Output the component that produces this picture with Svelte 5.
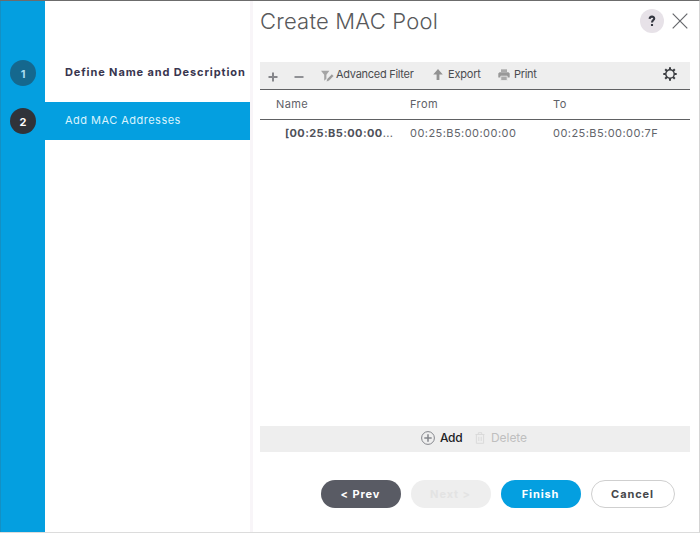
<script>
  const steps = [
    { n: 1, label: 'Define Name and Description', active: false },
    { n: 2, label: 'Add MAC Addresses', active: true }
  ];
  const rows = [{ name: '[00:25:B5:00:00', from: '00:25:B5:00:00:00', to: '00:25:B5:00:00:7F' }];
</script>

<div class="dialog">
  <aside class="rail">
    {#each steps as s}
      <div class="badge" class:current={s.active}>{s.n}</div>
    {/each}
  </aside>
  <nav>
    {#each steps as s}
      <div class="step" class:active={s.active}><span>{s.label}</span></div>
    {/each}
  </nav>
  <main>
    <header>
      <h1>Create MAC Pool</h1>
      <div class="help"><svg width="8" height="12" viewBox="0 0 10 14" fill="none" stroke="#353741" stroke-width="2.6"><path d="M2 4.4C2.2 .7 7.8 .7 7.8 3.8C7.8 5.8 5 5.8 5 9M5 10.8V13.4" /></svg></div>
      <svg class="close" width="16" height="16" viewBox="0 0 16 16" stroke="#66686c" stroke-width="1.2"><path d="M.7 .7L15.3 15.3M15.3 .7L.7 15.3" /></svg>
    </header>

    <div class="toolbar">
      <svg class="plus" width="10" height="10" viewBox="0 0 10 10" stroke="#85868a" stroke-width="2"><path d="M.5 5H9.5M5 .5V9.5" /></svg>
      <svg class="minus" width="10" height="10" viewBox="0 0 10 10" stroke="#909195" stroke-width="2"><path d="M.5 5H9.5" /></svg>
      <svg class="filter" width="13" height="12" viewBox="0 0 13 12"><path d="M0 .8H8.4L5.4 4.8V8.8L3.2 10.8V4.8Z" fill="#a4a4a4" /><path d="M5.2 11.8L5.9 8.9L10.8 4L12.8 6L7.9 10.9Z" fill="#9b9b9b" stroke="#eee" stroke-width=".7" /></svg>
      <span class="adv">Advanced Filter</span>
      <svg class="up" width="10" height="11" viewBox="0 0 10 11" fill="#929292"><path d="M5 0L9.8 5.6H6.4V11H3.6V5.6H.2Z" /></svg>
      <span class="export">Export</span>
      <svg class="printer" width="12" height="12" viewBox="0 0 12 12"><path d="M3 .3H9V3H3Z" fill="#aaa" /><path d="M1.5 3.2H10.5L11.7 4.5V8.5H.3V4.5Z" fill="#989898" /><path d="M2.8 7.2H9.2V11.5H2.8Z" fill="#aaa" stroke="#eee" stroke-width=".8" /></svg>
      <span class="print">Print</span>
      <svg class="gear" width="14" height="14" viewBox="0 0 14 14" fill="none" stroke="#3a3c40"><circle cx="7" cy="7" r="4.2" stroke-width="1.4" /><path d="M7 .3V2.8M7 11.2V13.7M.3 7H2.8M11.2 7H13.7M2.2 2.2L4 4M10 10L11.8 11.8M2.2 11.8L4 10M10 4L11.8 2.2" stroke-width="2" /></svg>
    </div>

    <div class="grid head"><span class="h1">Name</span><span class="h2">From</span><span class="h3">To</span></div>
    <div class="body">
      {#each rows as r}
        <div class="grid row"><span class="name"><b>{r.name}</b>...</span><span>{r.from}</span><span>{r.to}</span></div>
      {/each}
    </div>

    <div class="tablefoot">
      <svg width="14" height="14" viewBox="0 0 14 14" fill="none" stroke="#84868c"><circle cx="7" cy="7" r="6.4" stroke-width="1" /><path d="M7 3.3V10.7M3.3 7H10.7" stroke-width="1.5" /></svg>
      <span class="add">Add</span>
      <svg class="trash" width="10" height="12" viewBox="0 0 10 12" fill="none" stroke="#dadada"><path d="M.5 2.5H9.5M3.3 2.5V.7H6.7V2.5M1.4 2.5V11.3H8.6V2.5M3.8 4.8V9M6.2 4.8V9" /></svg>
      <span class="delete">Delete</span>
    </div>

    <footer>
      <button class="prev">&lt; Prev</button>
      <button class="next" disabled>Next &gt;</button>
      <button class="finish">Finish</button>
      <button class="cancel">Cancel</button>
    </footer>
  </main>
</div>

<style>
  :global(body) { margin: 0; background: #fff; }
  * { box-sizing: border-box; }
  .dialog {
    display: flex; width: 700px; height: 533px; overflow: hidden; background: #fff;
    border-top: 1px solid #6c6c6c; border-right: 1px solid #d4d4d4; border-bottom: 1px solid #dcdcdc;
    font-family: Inter, "Liberation Sans", sans-serif; font-size: 11px; color: #4f5056; white-space: nowrap;
  }
  .rail {
    flex: 0 0 45px; background: #049fe0; border-left: 1px solid #1390c4; padding: 59px 0 0 9px;
    display: flex; flex-direction: column; gap: 22px;
  }
  .badge {
    width: 26px; height: 26px; border-radius: 50%; background: #15688e; color: #a7dcf1;
    font-weight: 700; line-height: 28px; text-align: center;
  }
  .current { background: #303339; color: #fff; }
  nav { flex: 0 0 205px; padding-top: 53px; }
  .step { height: 38px; margin-bottom: 10px; padding-left: 20px; line-height: 37px; font-weight: 700; color: #39364f; }
  .step span { letter-spacing: .88px; }
  .active { background: #049fe0; color: #d9f3fd; font-weight: 400; }
  .active span { letter-spacing: .48px; }
  main { flex: 1; border-left: 3px solid #f8f5f8; padding: 0 9px 0 7px; display: flex; flex-direction: column; }
  header { height: 61px; display: flex; align-items: flex-start; }
  h1 { margin: 6px auto 0 0; font-size: 22px; line-height: 28px; font-weight: 300; color: #58595b; letter-spacing: .2px; }
  .help { width: 24px; height: 24px; margin-top: 8px; border-radius: 50%; background: #e7e2e8; display: flex; align-items: center; justify-content: center; }
  .close { margin: 12px 2px 0 8px; }
  .toolbar { height: 28px; background: #eee; border-bottom: 1px solid #606163; display: flex; align-items: center; padding: 0 13px 3px 8px; color: #4b4c50; }
  .toolbar svg { flex: none; }
  .plus { margin-top: 5px; }
  .minus { margin: 5px 0 0 16px; }
  .filter { margin: 3px 2px 0 17px; }
  .adv { width: 78px; letter-spacing: -.28px; }
  .up { margin: 0 5px 0 19px; }
  .export { width: 33px; letter-spacing: -.2px; }
  .printer { margin: 2px 4px 0 17px; }
  .print { letter-spacing: -.3px; }
  .gear { margin-left: auto; }
  .grid { display: grid; grid-template-columns: 150px 143px 1fr; }
  .head { height: 30px; line-height: 28px; border-bottom: 1px solid #606163; color: #606167; letter-spacing: .4px; }
  .h1 { padding-left: 16px; }
  .body { height: 306px; }
  .row { line-height: 26px; color: #62646a; letter-spacing: .45px; }
  .name { padding-left: 25px; }
  .name b { color: #4f5159; letter-spacing: .4px; }
  .tablefoot { height: 26px; background: #eee; display: flex; align-items: center; padding: 0 0 2px 161px; font-size: 12px; }
  .tablefoot span { position: relative; top: -1px; }
  .add { color: #202124; margin-left: 5px; width: 23px; font-weight: 500; letter-spacing: -.3px; }
  .trash { margin: 0 6px 0 12px; }
  .delete { color: #bfbfbf; letter-spacing: -.05px; }
  footer { display: flex; padding: 28px 0 0 60.5px; gap: 10px; }
  button { width: 80px; height: 28px; padding: 0 0 1px; border: 0; border-radius: 14px; font: 700 11px Inter, sans-serif; letter-spacing: .9px; color: #fff; }
  .prev { background: #595b64; }
  .next { background: #eee; color: #e3e3e3; }
  .finish { background: #049fe0; }
  .cancel { width: 84px; background: #fff; color: #46474b; border: 1px solid #cfcfcf; }
</style>
